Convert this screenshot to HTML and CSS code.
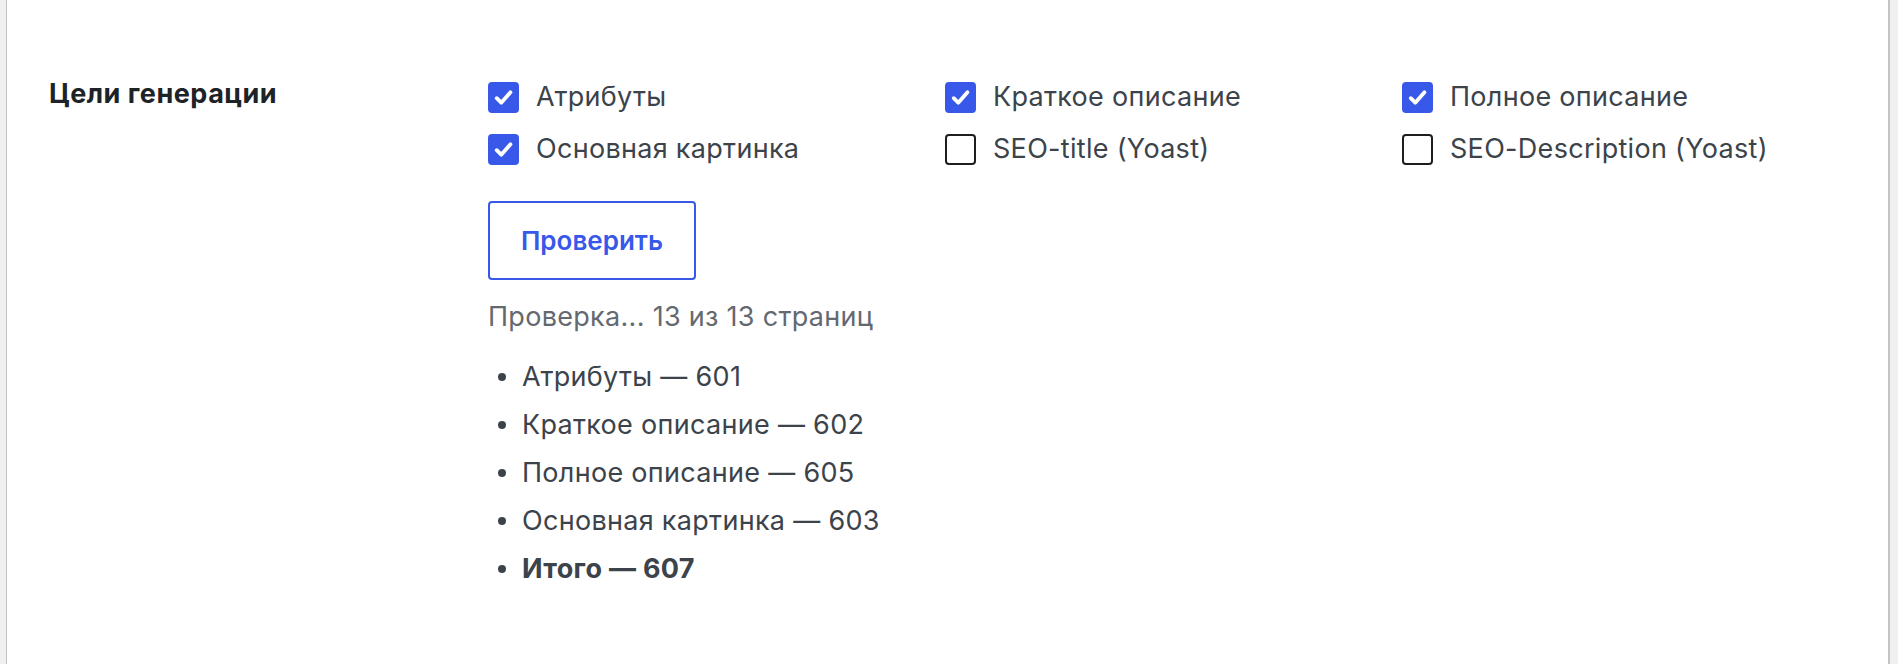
FILE: index.html
```html
<!DOCTYPE html>
<html lang="ru">
<head>
  <meta charset="UTF-8">
  <title>Цели генерации</title>
  <meta name="viewport" content="width=device-width, initial-scale=1.0">
  <link rel="stylesheet" href="styles.css">
</head>
<body>
  <div class="card">
    <div class="form-row">
      <div class="row-label">Цели генерации</div>

      <div class="row-field">
        <div class="targets">
          <label class="target">
            <span class="box on"><svg viewBox="0 0 24 24"><path d="M6 12.6l4 4L18.2 7.4"/></svg></span>
            Атрибуты
          </label>
          <label class="target">
            <span class="box on"><svg viewBox="0 0 24 24"><path d="M6 12.6l4 4L18.2 7.4"/></svg></span>
            Краткое описание
          </label>
          <label class="target">
            <span class="box on"><svg viewBox="0 0 24 24"><path d="M6 12.6l4 4L18.2 7.4"/></svg></span>
            Полное описание
          </label>
          <label class="target">
            <span class="box on"><svg viewBox="0 0 24 24"><path d="M6 12.6l4 4L18.2 7.4"/></svg></span>
            Основная картинка
          </label>
          <label class="target">
            <span class="box"></span>
            SEO-title (Yoast)
          </label>
          <label class="target">
            <span class="box"></span>
            SEO-Description (Yoast)
          </label>
        </div>

        <button class="check-btn" type="button">Проверить</button>

        <div class="status">Проверка... 13 из 13 страниц</div>

        <ul class="results">
          <li>Атрибуты — 601</li>
          <li>Краткое описание — 602</li>
          <li>Полное описание — 605</li>
          <li>Основная картинка — 603</li>
          <li class="total">Итого — 607</li>
        </ul>
      </div>
    </div>
  </div>
</body>
</html>
```

FILE: styles.css
```css
* {
  box-sizing: border-box;
}

body {
  margin: 0;
  background: #f0f0f1;
  font-family: Inter, "Noto Sans", sans-serif;
  color: #3c434a;
}

.card {
  margin: 0 8px 0 6px;
  min-height: 664px;
  background: #fff;
  border-left: 1px solid #c3c4c7;
  border-right: 2px solid #c3c4c7;
}

.form-row {
  display: flex;
  padding-top: 78px;
}

.row-label {
  width: 481px;
  padding-left: 42px;
  font-size: 27px;
  line-height: 32px;
  letter-spacing: 0.5px;
  font-weight: 700;
  color: #1d2327;
}

.row-field {
  padding-top: 3px;
}

.targets {
  display: grid;
  grid-template-columns: repeat(3, 457px);
  row-gap: 20px;
}

.target {
  display: flex;
  align-items: center;
  gap: 17px;
  font-size: 27px;
  line-height: 32px;
  letter-spacing: 0.3px;
  cursor: pointer;
}

.box {
  width: 31px;
  height: 31px;
  border: 2px solid #1e1e1e;
  border-radius: 4px;
  flex-shrink: 0;
  display: flex;
  align-items: center;
  justify-content: center;
}

.box.on {
  background: #3858e9;
  border-color: #3858e9;
}

.box svg {
  width: 27px;
  height: 27px;
  fill: none;
  stroke: #fff;
  stroke-width: 3.4;
  stroke-linecap: round;
  stroke-linejoin: round;
}

.check-btn {
  display: block;
  margin-top: 36px;
  width: 208px;
  height: 79px;
  background: #fff;
  border: 2px solid #3858e9;
  border-radius: 4px;
  color: #3858e9;
  font-family: inherit;
  font-size: 26px;
  font-weight: 600;
  cursor: pointer;
}

.status {
  margin-top: 21px;
  font-size: 27px;
  line-height: 32px;
  letter-spacing: 0.3px;
  color: #646970;
}

.results {
  list-style: none;
  margin: 20px 0 0;
  padding: 0 0 0 10px;
}

.results li {
  display: flex;
  align-items: center;
  gap: 16px;
  font-size: 27px;
  line-height: 48px;
  letter-spacing: 0.3px;
}

.results li::before {
  content: "";
  width: 8px;
  height: 8px;
  border-radius: 50%;
  background: #3c434a;
}

.results .total {
  font-weight: 700;
}
```
